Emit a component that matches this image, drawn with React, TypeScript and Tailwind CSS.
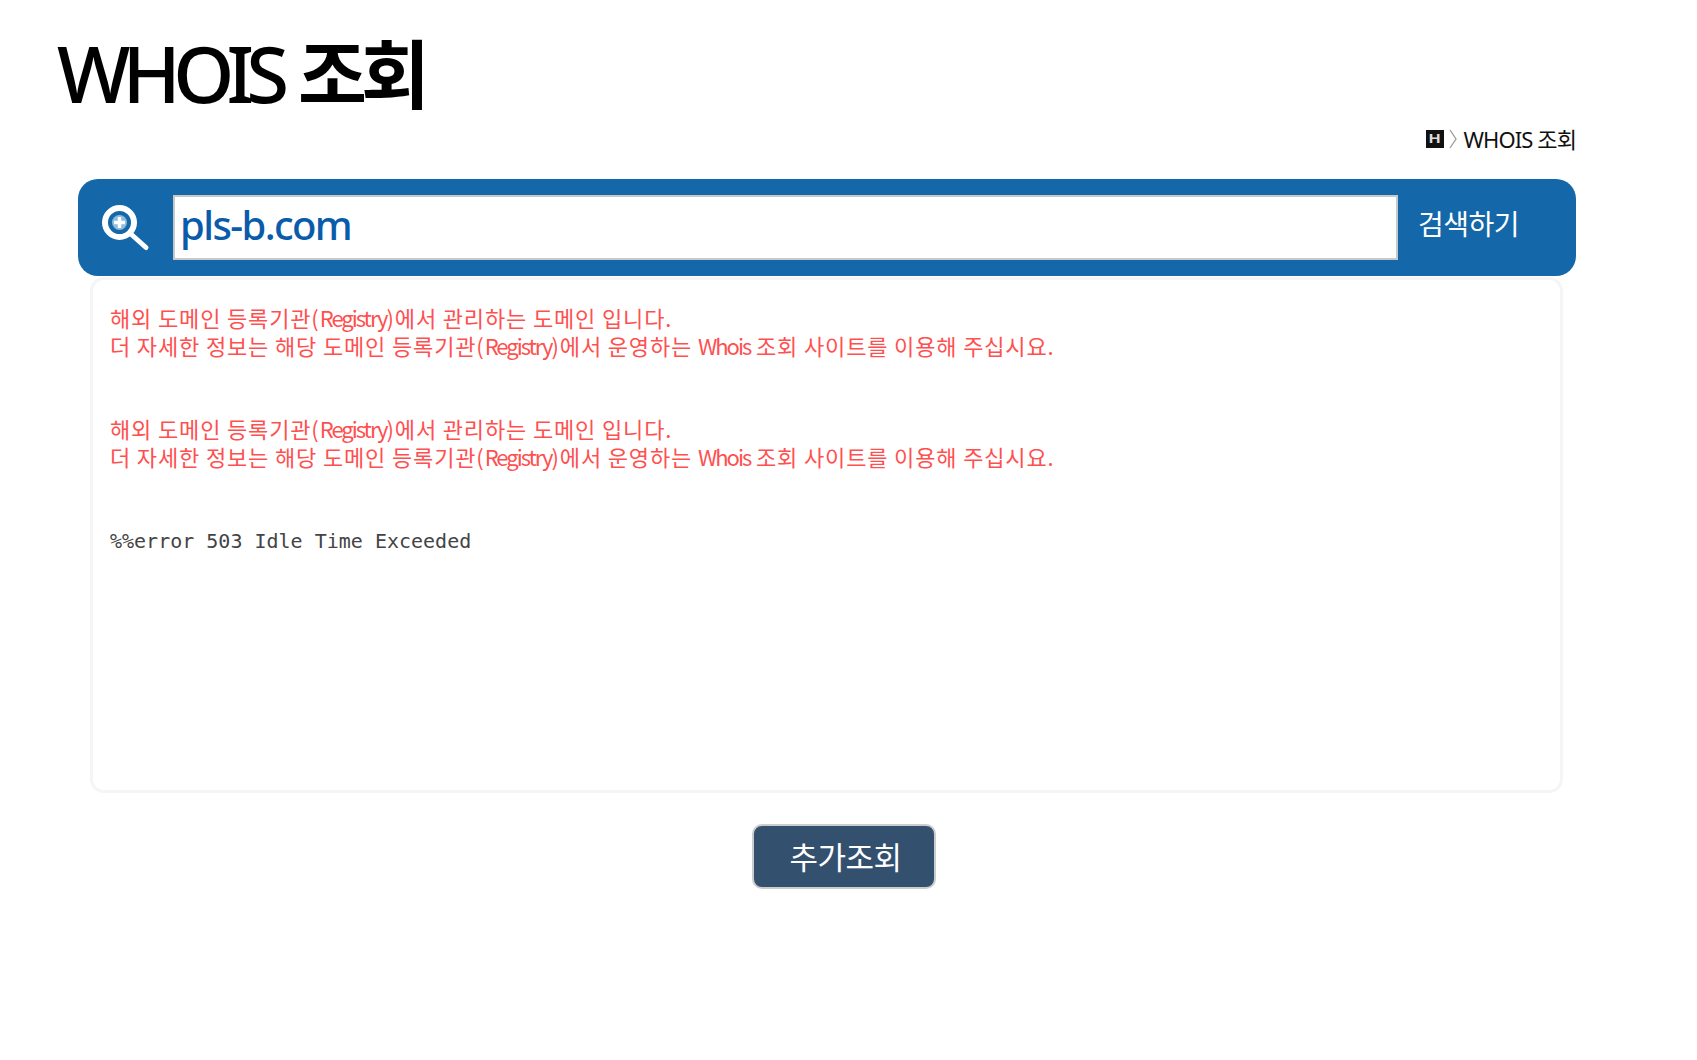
const kr = "font-['Noto_Sans','Noto_Sans_CJK_KR',sans-serif]";

function Notice() {
  return (
    <div className="text-[#ff5050] text-[22px] leading-[28px] tracking-[0.85px] font-['Noto_Sans_CJK_KR',sans-serif] font-normal whitespace-nowrap">
      <p>해외 도메인 등록기관(<span className="tracking-[-2px]">Registry</span>)에서 관리하는 도메인 입니다.</p>
      <p>더 자세한 정보는 해당 도메인 등록기관(<span className="tracking-[-2px]">Registry</span>)에서 운영하는 <span className="tracking-[-2px]">Whois</span> 조회 사이트를 이용해 주십시요.</p>
    </div>
  );
}

export default function App() {
  return (
    <div className={`w-[1697px] h-[1060px] bg-white overflow-hidden ${kr}`}>
      <h1 className="pl-[57px] pt-[18px] h-[123px] text-[78px] leading-[110px] font-medium tracking-[-7.8px] text-black whitespace-nowrap">
        WHOIS <span className="ml-[4px] font-bold text-[75px] tracking-[-6px]">조회</span>
      </h1>
      <div className="w-[1498px] ml-[78px]">
        <div className="flex items-center justify-end h-[32px] text-[22px] tracking-[-0.9px] text-[#111]">
          <span className="w-[18px] h-[18px] bg-[#111] flex items-center justify-center text-[#ddd] text-[13px] font-bold tracking-normal font-['Liberation_Sans',sans-serif]"><span className="scale-x-125">H</span></span>
          <svg width="12" height="22" viewBox="0 0 12 22" className="ml-[3px] mr-[3px]" fill="none" stroke="#9a9a9a" strokeWidth="1.3"><path d="M3 2l6 9-6 9" /></svg>
          <span className="ml-[2px]">WHOIS 조회</span>
        </div>
        <div className="mt-[24px] h-[97px] bg-[#1467a8] rounded-[20px] flex items-center">
          <div className="w-[95px] flex justify-center">
            <svg width="50" height="50" viewBox="0 0 50 50" fill="none" stroke="#fff">
              <circle cx="18.5" cy="19.5" r="14.500" strokeWidth="6" />
              <circle cx="18.500" cy="19.500" r="7.500" fill="#8fbbdd" stroke="none" />
              <path d="M18.500 14v11M13 19.500h11" stroke="#fff" strokeWidth="3.500" />
              <path d="M31 32l14 12.500" strokeWidth="5" strokeLinecap="round" />
            </svg>
          </div>
          <input
            readOnly
            value="pls-b.com"
            className="w-[1225px] h-[65px] bg-white border-2 border-[#c8c8c8] px-[5px] pb-[6px] text-[40px] font-medium tracking-[-1.6px] text-[#0a5cab] outline-none"
          />
          <span className="ml-[20px] text-[28px] text-white tracking-[-0.5px] -mt-[8px]">검색하기</span>
        </div>
        <div className="ml-[12px] w-[1473px] h-[516px] mt-[1px] border-[3px] border-[#f5f5f5] rounded-[14px] pl-[17px] pt-[23px] bg-white">
          <Notice />
          <div className="mt-[55px]"><Notice /></div>
          <p className="mt-[57px] text-[20px] leading-[28px] text-[#444] font-['DejaVu_Sans_Mono',monospace] font-light whitespace-pre">%%error 503 Idle Time Exceeded</p>
        </div>
        <div className="flex justify-center mt-[31px] pl-[33px]">
          <button className="w-[184px] h-[65px] bg-[#34506f] border-2 border-[#cccccc] rounded-[10px] text-white text-[31px] tracking-[-0.5px] pl-[4px] pt-[2px]">추가조회</button>
        </div>
      </div>
    </div>
  );
}
